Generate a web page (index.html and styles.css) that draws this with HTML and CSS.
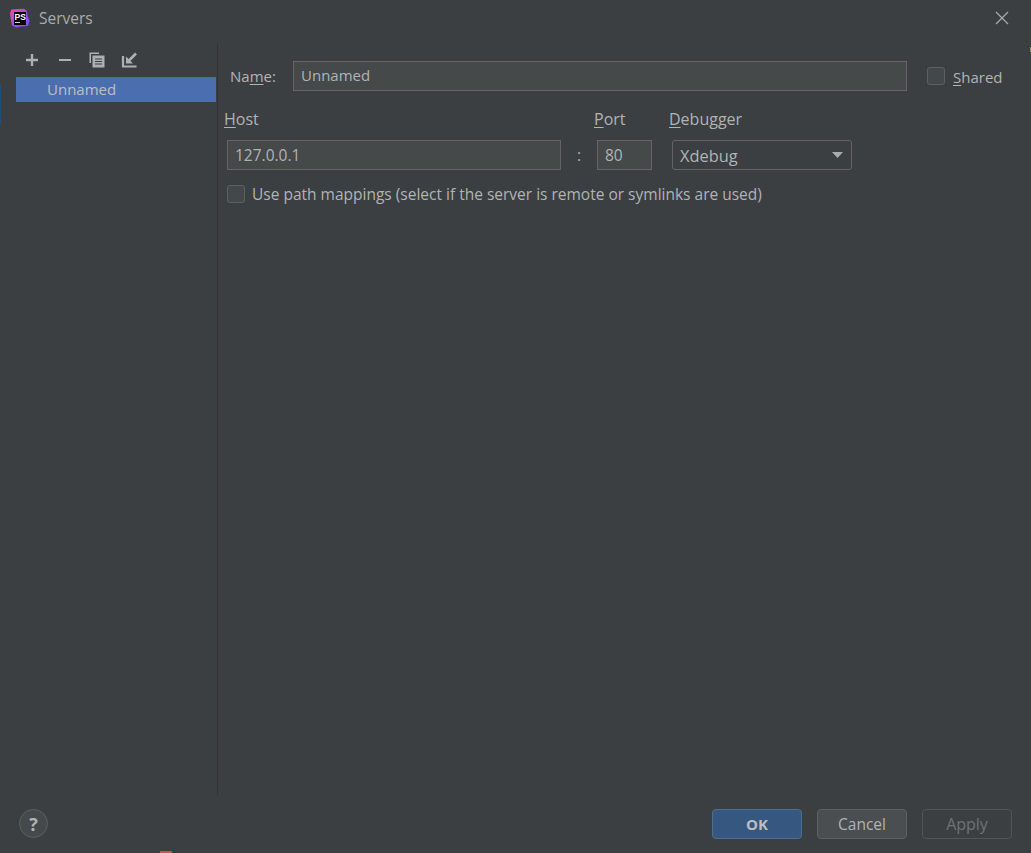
FILE: index.html
```html
<!DOCTYPE html>
<html lang="en">
<head>
<meta charset="utf-8">
<title>Servers</title>
<link rel="stylesheet" href="styles.css">
</head>
<body>
<div class="dialog">
  <header class="titlebar">
    <svg class="logo" width="21" height="20" viewBox="0 0 21 20">
      <defs>
        <linearGradient id="pg" x1="0" y1="0" x2="1" y2="1">
          <stop offset="0" stop-color="#f04fa8"/>
          <stop offset="0.5" stop-color="#a04be8"/>
          <stop offset="1" stop-color="#6b57ff"/>
        </linearGradient>
      </defs>
      <path d="M2.500 1.500 L9 1 L15 0.800 L18 3 L18.500 8 L20.500 13 L19 18 L12 18.500 L7 19.500 L3 17.500 L1.500 10 L1 5 Z" fill="url(#pg)"/>
      <rect x="5" y="4" width="12" height="13" fill="#000"/>
      <text x="5.600" y="11.500" class="logo-text">PS</text>
      <rect x="6" y="14" width="5" height="1" fill="#cfcfcf"/>
    </svg>
    <span class="title">Servers</span>
    <svg class="close" width="14" height="14" viewBox="0 0 14 14">
      <path d="M1 1 L13 13 M13 1 L1 13" stroke="#a9acae" stroke-width="1.200" fill="none"/>
    </svg>
  </header>

  <div class="main">
    <aside class="side">
      <div class="toolbar">
        <svg width="16" height="16" viewBox="0 0 16 16"><path d="M8 2 V14 M2 8 H14" stroke="#adb0b2" stroke-width="2.400" fill="none"/></svg>
        <svg class="tool-minus" width="16" height="16" viewBox="0 0 16 16"><path d="M2 8 H14" stroke="#adb0b2" stroke-width="2" fill="none"/></svg>
        <svg width="16" height="16" viewBox="0 0 16 16">
          <path d="M0.500 0.500 H10 V2 H2 V11 H0.500 Z" fill="#adb0b2"/>
          <path d="M3.500 3.500 H15.500 V15.500 H3.500 Z" fill="#adb0b2"/>
          <path d="M6 7 H13 M6 9.500 H13 M6 12 H13" stroke="#3c3f41" stroke-width="1.200" fill="none"/>
        </svg>
        <svg width="16" height="16" viewBox="0 0 16 16">
          <path d="M2 4 V14.500 H15.500" stroke="#adb0b2" stroke-width="2.200" fill="none"/>
          <path d="M15 1.500 L6.500 10" stroke="#adb0b2" stroke-width="2.600" fill="none"/>
          <path d="M5 4.500 V11.500 H12 Z" fill="#adb0b2"/>
        </svg>
      </div>
      <div class="list-row">Unnamed</div>
    </aside>

    <section class="form">
      <div class="name-row">
        <label class="name-label">Na<u>m</u>e:</label>
        <div class="field name-field">Unnamed</div>
        <span class="check"></span>
        <span class="shared"><u>S</u>hared</span>
      </div>
      <div class="host-grid">
        <span class="cap cap-host"><u>H</u>ost</span>
        <span class="cap cap-port"><u>P</u>ort</span>
        <span class="cap cap-debug"><u>D</u>ebugger</span>
        <div class="field host-field">127.0.0.1</div>
        <span class="colon">:</span>
        <div class="field port-field">80</div>
        <div class="combo">
          <span>Xdebug</span>
          <svg width="11" height="6" viewBox="0 0 11 6"><path d="M0 0 H11 L5.500 6 Z" fill="#a9acae"/></svg>
        </div>
      </div>
      <div class="map-row">
        <span class="check"></span>
        <span>Use path mappings (select if the server is remote or symlinks are used)</span>
      </div>
    </section>
  </div>

  <footer class="footer">
    <span class="help">?</span>
    <div class="buttons">
      <span class="btn btn-ok">OK</span>
      <span class="btn btn-cancel">Cancel</span>
      <span class="btn btn-apply">Apply</span>
    </div>
  </footer>
</div>
<span class="speck speck-red"></span>
<span class="speck speck-blue"></span>
<span class="speck speck-orange"></span>
</body>
</html>
```
FILE: styles.css
```css
* { box-sizing: border-box; }
html, body { margin: 0; height: 100%; }
body {
  background: #3c3f41;
  color: #b0b3b5;
  font-family: "Open Sans", "Noto Sans", sans-serif;
  font-size: 15.500px;
  overflow: hidden;
  position: relative;
}
u { text-underline-offset: 2px; text-decoration-thickness: 1px; }

.dialog { height: 853px; display: flex; flex-direction: column; }

.titlebar { height: 44px; flex: none; display: flex; align-items: flex-start; padding: 8px 22px 0 9px; }
.logo { flex: none; }
.logo-text { font-family: "Liberation Sans", sans-serif; font-size: 8.500px; font-weight: 700; fill: #fff; }
.title { margin-left: 9px; line-height: 21px; color: #a9acae; }
.close { margin-left: auto; margin-top: 3px; }

.main { flex: 1; display: flex; min-height: 0; }
.side { width: 218px; flex: none; border-right: 1px solid #323232; padding-left: 16px; }
.toolbar { height: 33px; display: flex; align-items: center; padding: 0 0 2px 8px; gap: 16px; }
.toolbar svg { flex: none; }
.tool-minus { margin-left: 1px; }
.list-row { height: 25px; background: #4b6eaf; line-height: 25px; padding-left: 31px; color: #bbbfc4; margin-right: 1px; font-size: 15px; }

.form { flex: 1; min-width: 0; padding: 17px 0 0 6px; }
.name-row { display: flex; align-items: center; height: 30px; }
.name-label { width: 69px; padding-left: 6px; flex: none; font-size: 15px; margin-top: -1px; }
.field {
  background: #45494a;
  border: 1px solid #646464;
  height: 30px;
  line-height: 28px;
  padding-left: 7px;
}
.name-field { width: 614px; flex: none; font-size: 15px; margin-right: 1px; line-height: 27px; }
.name-row .check { margin-left: 19px; }
.shared { margin-left: 8px; margin-top: 1px; font-size: 15px; }

.check {
  width: 18px; height: 18px; flex: none;
  border: 1px solid #5e6060;
  border-radius: 3px;
  background: #43494a;
}

.host-grid {
  display: grid;
  grid-template-columns: 334px 36px 55px 20px 180px;
  grid-template-rows: 35px 30px;
  margin-top: 14px;
  margin-left: 3px;
}
.cap { line-height: 20px; padding-top: 4px; font-size: 16px; }
.cap-host { grid-column: 1; margin-left: -3px; }
.cap-port { grid-column: 3; margin-left: -3px; }
.cap-debug { grid-column: 4 / 6; margin-left: 17px; }
.host-field { grid-column: 1; grid-row: 2; }
.colon { grid-column: 2; grid-row: 2; text-align: center; line-height: 30px; }
.port-field { grid-column: 3; grid-row: 2; }
.combo {
  grid-column: 4 / 6; grid-row: 2;
  margin-left: 20px; width: 180px;
  border: 1px solid #646464;
  border-radius: 3px;
  background: #3c3f41;
  display: flex; align-items: center; justify-content: space-between;
  padding: 0 8px 0 7px;
  font-size: 16.400px;
}
.combo span { margin-top: 1px; }
.map-row { display: flex; align-items: center; gap: 7px; margin: 14px 0 0 3px; height: 20px; }

.footer { height: 58px; flex: none; display: flex; justify-content: space-between; align-items: flex-start; padding: 0 19px; }
.help {
  width: 29px; height: 29px; border-radius: 50%;
  background: #46494b; border: 1px solid #5c6060;
  color: #b0b3b5; font-weight: 700; font-size: 18px;
  display: flex; align-items: center; justify-content: center;
  margin-top: 14px;
}
.buttons { display: flex; gap: 15px; margin-top: 14px; }
.btn {
  width: 90px; height: 30px; border-radius: 4px;
  display: flex; align-items: center; justify-content: center;
  border: 1px solid #5e6060;
}
.btn-ok { background: #365880; border-color: #4c708c; color: #bbbfc4; font-weight: 700; font-size: 15px; }
.btn-cancel { background: #4b4e50; border-color: #5e6060; }
.btn-apply { background: transparent; border-color: #525557; color: #6f7274; font-size: 16px; }

.speck { position: absolute; display: block; }
.speck-red { left: 160px; top: 851px; width: 12px; height: 2px; background: #c75450; }
.speck-blue { left: 0; top: 85px; width: 1px; height: 40px; background: #1f4e79; }
.speck-orange { left: 1030px; top: 47px; width: 1px; height: 5px; background: #a08b5c; }
```
